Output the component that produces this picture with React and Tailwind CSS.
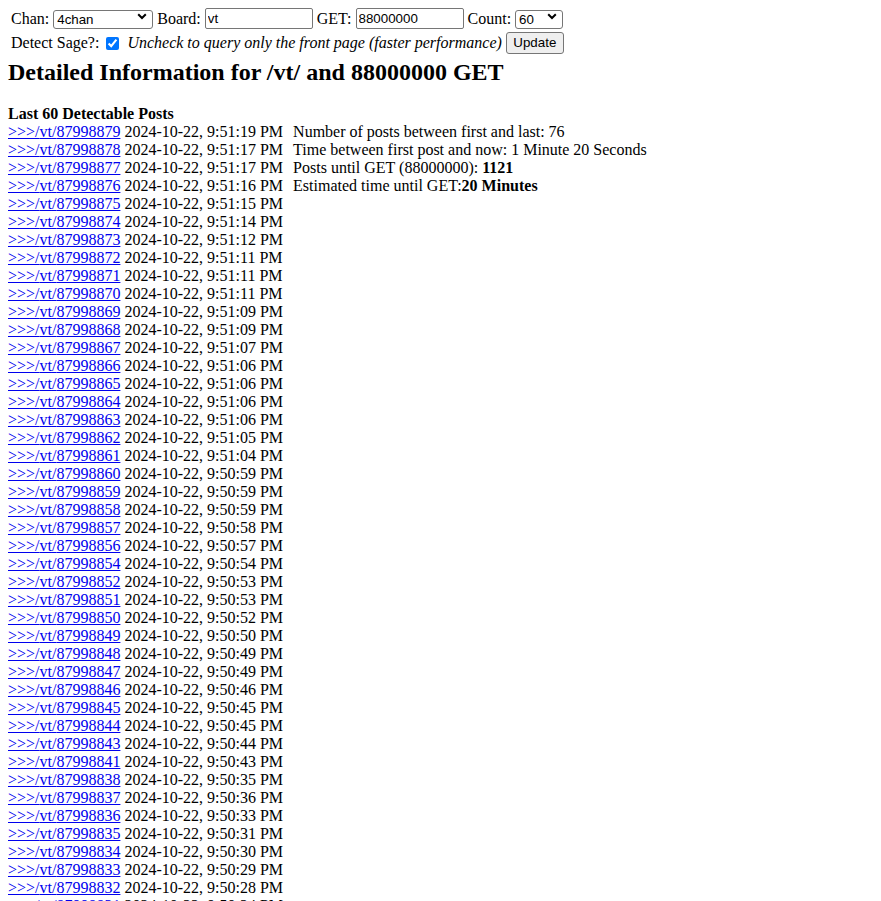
import React, { useState } from 'react';

const posts = [
    ['87998879', '9:51:19'], ['87998878', '9:51:17'], ['87998877', '9:51:17'], ['87998876', '9:51:16'],
    ['87998875', '9:51:15'], ['87998874', '9:51:14'], ['87998873', '9:51:12'], ['87998872', '9:51:11'],
    ['87998871', '9:51:11'], ['87998870', '9:51:11'], ['87998869', '9:51:09'], ['87998868', '9:51:09'],
    ['87998867', '9:51:07'], ['87998866', '9:51:06'], ['87998865', '9:51:06'], ['87998864', '9:51:06'],
    ['87998863', '9:51:06'], ['87998862', '9:51:05'], ['87998861', '9:51:04'], ['87998860', '9:50:59'],
    ['87998859', '9:50:59'], ['87998858', '9:50:59'], ['87998857', '9:50:58'], ['87998856', '9:50:57'],
    ['87998854', '9:50:54'], ['87998852', '9:50:53'], ['87998851', '9:50:53'], ['87998850', '9:50:52'],
    ['87998849', '9:50:50'], ['87998848', '9:50:49'], ['87998847', '9:50:49'], ['87998846', '9:50:46'],
    ['87998845', '9:50:45'], ['87998844', '9:50:45'], ['87998843', '9:50:44'], ['87998841', '9:50:43'],
    ['87998838', '9:50:35'], ['87998837', '9:50:36'], ['87998836', '9:50:33'], ['87998835', '9:50:31'],
    ['87998834', '9:50:30'], ['87998833', '9:50:29'], ['87998832', '9:50:28'], ['87998831', '9:50:24'],
    ['87998829', '9:50:22'], ['87998828', '9:50:21'], ['87998827', '9:50:19'], ['87998826', '9:50:18'],
    ['87998824', '9:50:16'], ['87998823', '9:50:15'], ['87998822', '9:50:12'], ['87998820', '9:50:11'],
    ['87998819', '9:50:09'], ['87998818', '9:50:08'], ['87998816', '9:50:06'], ['87998815', '9:50:05'],
    ['87998813', '9:50:03'], ['87998812', '9:50:02'], ['87998806', '9:50:00'], ['87998803', '9:49:59'],
];

const Chevron = () => (
    <svg width="10" height="7" viewBox="0 0 10 7" className="absolute right-[6px] top-[6px] pointer-events-none">
        <path d="M1.2 1.2 L5 5 L8.8 1.2" fill="none" stroke="#000" strokeWidth="2" />
    </svg>
);

const App = () => {
    const [chan, setChan] = useState('4chan');
    const [board, setBoard] = useState('vt');
    const [get, setGet] = useState('88000000');
    const [count, setCount] = useState('60');
    const [sage, setSage] = useState(true);

    return (
        <div className="min-h-screen bg-white text-black text-[16px] pl-[8px] pt-[8px]" style={{ fontFamily: '"Liberation Serif", "Times New Roman", serif' }}>
            <div className="pl-[3px]">
                <div className="flex items-center gap-[4px] h-[21px]">
                    <span>Chan:</span>
                    <span className="relative inline-block">
                        <select
                            value={chan}
                            onChange={(e) => setChan(e.target.value)}
                            className="appearance-none w-[100px] h-[19px] border border-[#767676] rounded-[3px] bg-white pl-[3px] text-[13.33px] leading-[17px] outline-none"
                            style={{ fontFamily: '"Liberation Sans", Arial, sans-serif' }}
                        >
                            <option value="4chan">4chan</option>
                            <option value="8kun">8kun</option>
                        </select>
                        <Chevron />
                    </span>
                    <span>Board:</span>
                    <input
                        type="text"
                        value={board}
                        onChange={(e) => setBoard(e.target.value)}
                        className="w-[108px] h-[21px] border border-[#767676] rounded-[2px] bg-white px-[2px] text-[13.33px] outline-none"
                        style={{ fontFamily: '"Liberation Sans", Arial, sans-serif' }}
                    />
                    <span>GET:</span>
                    <input
                        type="text"
                        value={get}
                        onChange={(e) => setGet(e.target.value)}
                        className="w-[108px] h-[21px] border border-[#767676] rounded-[2px] bg-white px-[2px] text-[13.33px] outline-none"
                        style={{ fontFamily: '"Liberation Sans", Arial, sans-serif' }}
                    />
                    <span>Count:</span>
                    <span className="relative inline-block">
                        <select
                            value={count}
                            onChange={(e) => setCount(e.target.value)}
                            className="appearance-none w-[48px] h-[19px] border border-[#767676] rounded-[3px] bg-white pl-[3px] text-[13.33px] leading-[17px] outline-none"
                            style={{ fontFamily: '"Liberation Sans", Arial, sans-serif' }}
                        >
                            {['20', '40', '60', '80', '100'].map((n) => (
                                <option key={n} value={n}>{n}</option>
                            ))}
                        </select>
                        <Chevron />
                    </span>
                </div>

                <div className="flex items-center h-[22px] mt-[3px]">
                    <span>Detect Sage?:</span>
                    <input
                        type="checkbox"
                        checked={sage}
                        onChange={(e) => setSage(e.target.checked)}
                        className="w-[13px] h-[13px] ml-[7px] accent-[#0075ff]"
                    />
                    <i className="ml-[8px]">Uncheck to query only the front page (faster performance)</i>
                    <button
                        type="button"
                        className="ml-[4px] w-[58px] h-[22px] border border-[#767676] rounded-[3px] bg-[#efefef] text-[13.33px]"
                        style={{ fontFamily: '"Liberation Sans", Arial, sans-serif' }}
                    >
                        Update
                    </button>
                </div>
            </div>

            <h2 className="text-[24px] leading-[28px] font-bold mt-[4px]">
                Detailed Information for /{board}/ and {get} GET
            </h2>

            <div className="font-bold leading-[18px] mt-[19px]">Last {count} Detectable Posts</div>
            <div className="flex gap-[10px] leading-[18px]">
                <div>
                    {posts.slice(0, Number(count)).map(([id, time]) => (
                        <div key={id} className="whitespace-nowrap">
                            <a href={`#${id}`} className="text-[#0000ee] underline">&gt;&gt;&gt;/{board}/{id}</a> 2024-10-22, {time} PM
                        </div>
                    ))}
                </div>
                <div>
                    <div>Number of posts between first and last: 76</div>
                    <div>Time between first post and now: 1 Minute 20 Seconds</div>
                    <div>Posts until GET ({get}): <b>1121</b></div>
                    <div>Estimated time until GET:<b>20 Minutes</b></div>
                </div>
            </div>
        </div>
    );
};

export default App;
